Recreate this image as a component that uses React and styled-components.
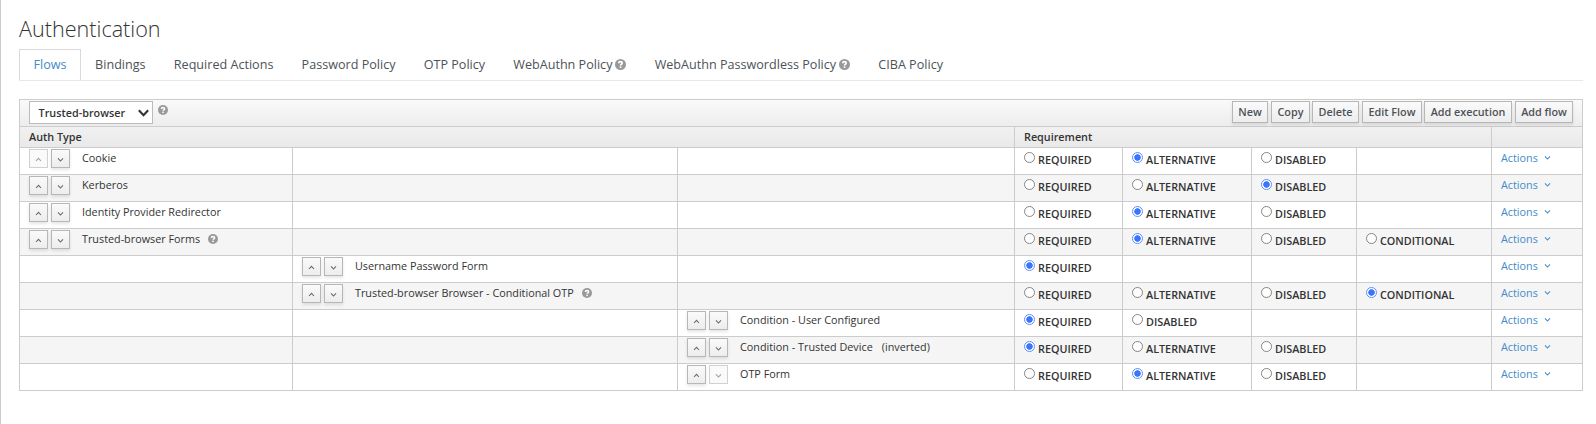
import React from "react";
import styled, { createGlobalStyle, css } from "styled-components";

const GlobalStyle = createGlobalStyle`
  * { box-sizing: border-box; }
  body {
    margin: 0;
    background: #fff;
    color: #333;
    font: 10.8px/20px "Open Sans", sans-serif;
  }
`;

const Page = styled.main`
  min-height: 424px;
  border-left: 1px solid #ccc;
  padding: 14px 13px 0 18px;
`;

const Title = styled.h1`
  margin: 0;
  height: 35px;
  font-size: 21.6px;
  line-height: 29px;
  font-weight: 300;
`;

const Tabs = styled.nav`
  display: flex;
  height: 32px;
  border-bottom: 1px solid #e9e8e8;
`;

const Tab = styled.a`
  display: flex;
  align-items: center;
  gap: 3px;
  height: 31px;
  padding: 0 ${(p) => (p.$active ? 13.5 : 13.1)}px 1px;
  border: 1px solid transparent;
  border-bottom: 0;
  font-size: 12.6px;
  color: #4d5258;
  white-space: nowrap;
  ${(p) => p.$active && css`
    border-color: #d9d9d9;
    color: #428bca;
  `}
`;

const Table = styled.section`
  width: 1564px;
  margin-top: 18px;
  border: 1px solid #ccc;
`;

const Toolbar = styled.div`
  display: flex;
  align-items: flex-start;
  height: 26px;
  padding: 1px 9px;
  background: linear-gradient(#fafafa, #ededed);
`;

const FlowSelect = styled.div`
  display: flex;
  align-items: center;
  justify-content: space-between;
  width: 124px;
  height: 23px;
  padding: 0 2px 0 8.6px;
  margin-right: 5px;
  border: 1px solid #bbb;
  background: #fff;
  font-weight: 600;
`;

const HelpSlot = styled.span`
  display: flex;
  padding-top: 4px;
`;

const ButtonGroup = styled.div`
  display: flex;
  margin-left: auto;
`;

const ToolButton = styled.button`
  width: ${(p) => p.$w}px;
  height: 22px;
  margin-left: ${(p) => p.$gap}px;
  padding: 0;
  border: 1px solid #b7b7b7;
  background: linear-gradient(#fafafa, #ededed);
  box-shadow: 0 2px 3px rgba(3, 3, 3, 0.1);
  color: #4d5258;
  font: 600 10.8px/20px "Open Sans", sans-serif;
  white-space: nowrap;
`;

const grid = css`
  display: grid;
  grid-template-columns: 272px 385px 337px 108px 129px 105px 135px 91px;
  border-top: 1px solid #ccc;
`;

const HeaderRow = styled.div`
  ${grid}
  height: 21px;
  background: linear-gradient(#f1f1f1, #e9e9e9);
  font-weight: 600;
`;

const HeaderCell = styled.div`
  grid-column: span ${(p) => p.$span};
  padding-left: 9px;
  & + & { border-left: 1px solid #ccc; }
`;

const Row = styled.div`
  ${grid}
  height: 27px;
  &:nth-child(even) { background: #f5f5f5; }
`;

const Cell = styled.div`
  display: flex;
  align-items: flex-start;
  padding-left: 9px;
  white-space: nowrap;
  & + & { border-left: 1px solid #ccc; }
`;

const MoveButton = styled.button`
  display: grid;
  place-items: center;
  width: 19px;
  height: 19px;
  margin: 1px 3px 0 0;
  padding: 2px 0 0;
  border: 1px solid #b7b7b7;
  background: linear-gradient(#fafafa, #ededed);
  box-shadow: 0 2px 3px rgba(3, 3, 3, 0.1);
  color: #64686d;
  &:disabled {
    background: #fafafa;
    border-color: #d1d1d1;
    box-shadow: none;
    color: #9c9ea0;
  }
`;

const Name = styled.span`
  margin-left: 9px;
`;

const NameHelp = styled.span`
  display: flex;
  padding: 5px 0 0 8px;
`;

const Note = styled.span`
  margin-left: 9px;
`;

const RadioLabel = styled.label`
  display: flex;
  gap: 3px;
  font-weight: 600;
  line-height: 24px;
`;

const Radio = styled.input`
  appearance: none;
  width: 11px;
  height: 11px;
  margin: 4px 0 0;
  border: 1px solid #858585;
  border-radius: 50%;
  background: #fff;
  &:checked {
    border-color: #5c90ff;
    background: radial-gradient(circle, #3b75ff 2.9px, #fff 3.6px);
  }
`;

const ActionsLink = styled.a`
  display: flex;
  align-items: flex-start;
  gap: 6px;
  color: #428bca;
  svg { margin-top: 6px; }
`;

const Chevron = ({ up, size = 7, weight = 1.05 }) => (
  <svg width={size} height={size} viewBox="0 0 7 7" fill="none" stroke="currentColor" strokeWidth={weight}>
    <path d={up ? "M1 5L3.5 2.3L6 5" : "M1 2.3L3.5 5L6 2.3"} />
  </svg>
);

const Help = ({ size = 10 }) => (
  <svg width={size} height={size} viewBox="0 0 10 10" fill="none">
    <circle cx="5" cy="5" r="5" fill="#999" />
    <path d="M3.4 3.9C3.4 2.9 4.1 2.4 5 2.4C5.9 2.4 6.6 2.9 6.6 3.7C6.6 4.8 5.1 4.8 5.1 5.8" stroke="#fff" strokeWidth="1.5" />
    <rect x="4.3" y="6.6" width="1.5" height="1.5" fill="#fff" />
  </svg>
);

const tabs = [
  ["Flows"], ["Bindings"], ["Required Actions"], ["Password Policy"], ["OTP Policy"],
  ["WebAuthn Policy", true], ["WebAuthn Passwordless Policy", true], ["CIBA Policy"],
];

const tools = [
  ["New", 36, 0], ["Copy", 39, 3], ["Delete", 47, 2],
  ["Edit Flow", 60, 3], ["Add execution", 88, 2], ["Add flow", 58, 3],
];

const R = "REQUIRED";
const A = "ALTERNATIVE";
const D = "DISABLED";
const C = "CONDITIONAL";

const executions = [
  { name: "Cookie", level: 0, options: [R, A, D], value: A, first: true },
  { name: "Kerberos", level: 0, options: [R, A, D], value: D },
  { name: "Identity Provider Redirector", level: 0, options: [R, A, D], value: A },
  { name: "Trusted-browser Forms", level: 0, options: [R, A, D, C], value: A, help: true },
  { name: "Username Password Form", level: 1, options: [R], value: R },
  { name: "Trusted-browser Browser - Conditional OTP", level: 1, options: [R, A, D, C], value: C, help: true },
  { name: "Condition - User Configured", level: 2, options: [R, D], value: R },
  { name: "Condition - Trusted Device", level: 2, options: [R, A, D], value: R, note: "(inverted)" },
  { name: "OTP Form", level: 2, options: [R, A, D], value: A, last: true },
];

const Execution = ({ item }) => (
  <Row>
    {[0, 1, 2].map((level) => (
      <Cell key={level}>
        {level === item.level && (
          <>
            <MoveButton disabled={item.first} aria-label="Move up"><Chevron up /></MoveButton>
            <MoveButton disabled={item.last} aria-label="Move down"><Chevron /></MoveButton>
            <Name>{item.name}</Name>
            {item.help && <NameHelp><Help /></NameHelp>}
            {item.note && <Note>{item.note}</Note>}
          </>
        )}
      </Cell>
    ))}
    {[0, 1, 2, 3].map((i) => (
      <Cell key={i}>
        {item.options[i] && (
          <RadioLabel>
            <Radio type="radio" name={item.name} defaultChecked={item.options[i] === item.value} />
            {item.options[i]}
          </RadioLabel>
        )}
      </Cell>
    ))}
    <Cell><ActionsLink>Actions <Chevron /></ActionsLink></Cell>
  </Row>
);

export default function App() {
  return (
    <Page>
      <GlobalStyle />
      <Title>Authentication</Title>
      <Tabs>
        {tabs.map(([label, help], i) => (
          <Tab key={label} $active={i === 0}>{label}{help && <Help size={11} />}</Tab>
        ))}
      </Tabs>
      <Table>
        <Toolbar>
          <FlowSelect>Trusted-browser <Chevron size={13} weight={1.15} /></FlowSelect>
          <HelpSlot><Help /></HelpSlot>
          <ButtonGroup>
            {tools.map(([label, w, gap]) => (
              <ToolButton key={label} $w={w} $gap={gap}>{label}</ToolButton>
            ))}
          </ButtonGroup>
        </Toolbar>
        <HeaderRow>
          <HeaderCell $span={3}>Auth Type</HeaderCell>
          <HeaderCell $span={4}>Requirement</HeaderCell>
          <HeaderCell $span={1} />
        </HeaderRow>
        <div>
          {executions.map((item) => <Execution key={item.name} item={item} />)}
        </div>
      </Table>
    </Page>
  );
}
